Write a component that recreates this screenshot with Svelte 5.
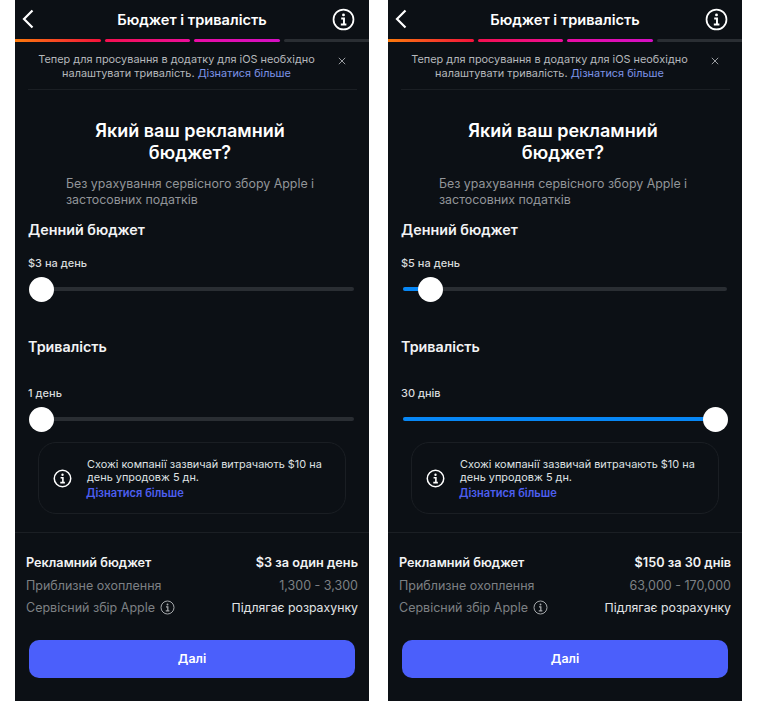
<script>
  const screens = [
    {
      dayLabel: '$3 на день',
      dayPos: 1,
      durLabel: '1 день',
      durPos: 1,
      budget: '$3 за один день',
      reach: '1,300 - 3,300'
    },
    {
      dayLabel: '$5 на день',
      dayPos: 17,
      durLabel: '30 днів',
      durPos: 302,
      budget: '$150 за 30 днів',
      reach: '63,000 - 170,000'
    }
  ];
</script>

{#snippet infoIcon(size, stroke)}
  <svg width={size} height={size} viewBox="0 0 24 24" fill="none" stroke="currentColor" stroke-width={stroke}>
    <circle cx="12" cy="12" r="10.4" />
    <circle cx="12" cy="7.2" r="1.5" fill="currentColor" stroke="none" />
    <path d="M9.6 11h2.9v6M9.2 17.2h5.8" stroke-width="2" />
  </svg>
{/snippet}

{#snippet slider(pos)}
  <div class="slider">
    <div class="track"></div>
    <div class="fill" style="width: {pos + 8}px"></div>
    <div class="thumb" style="left: {pos}px"></div>
  </div>
{/snippet}

<div class="page">
  {#each screens as s}
    <section class="phone">
      <header class="topbar">
        <svg class="back" width="12" height="20" viewBox="0 0 12 20" fill="none" stroke="currentColor" stroke-width="2.2">
          <path d="M10.5 1.5 2 10l8.5 8.5" />
        </svg>
        <h1>Бюджет і тривалість</h1>
        <span class="top-info">{@render infoIcon(23, 1.8)}</span>
      </header>

      <div class="progress">
        <span class="seg s1"></span>
        <span class="seg s2"></span>
        <span class="seg s3"></span>
        <span class="seg s4"></span>
      </div>

      <div class="notice">
        <p>Тепер для просування в додатку для iOS необхідно налаштувати тривалість. <span class="notice-link">Дізнатися більше</span></p>
        <svg class="close" width="8" height="8" viewBox="0 0 8 8" stroke="currentColor" stroke-width="1">
          <path d="M.8.8l6.4 6.4M7.2.8.8 7.2" />
        </svg>
      </div>

      <div class="intro">
        <h2>Який ваш рекламний<br />бюджет?</h2>
        <p>Без урахування сервісного збору Apple і застосовних податків</p>
      </div>

      <div class="controls">
        <h3>Денний бюджет</h3>
        <div class="value first">{s.dayLabel}</div>
        {@render slider(s.dayPos)}
        <h3 class="dur">Тривалість</h3>
        <div class="value second">{s.durLabel}</div>
        {@render slider(s.durPos)}
      </div>

      <div class="tip">
        <span class="tip-icon">{@render infoIcon(19, 1.9)}</span>
        <div class="tip-body">
          <p>Схожі компанії зазвичай витрачають $10 на день упродовж 5 дн.</p>
          <span class="tip-link">Дізнатися більше</span>
        </div>
      </div>

      <div class="summary">
        <div class="row strong">
          <span>Рекламний бюджет</span>
          <span>{s.budget}</span>
        </div>
        <div class="row">
          <span>Приблизне охоплення</span>
          <span>{s.reach}</span>
        </div>
        <div class="row">
          <span class="fee">Сервісний збір Apple {@render infoIcon(15, 1.6)}</span>
          <span class="pending">Підлягає розрахунку</span>
        </div>
      </div>

      <button class="next">Далі</button>
    </section>
  {/each}
</div>

<style>
  :global(body) {
    background: #fff;
  }

  .page {
    display: flex;
    gap: 19px;
    width: 760px;
    height: 701px;
    padding-left: 15px;
    box-sizing: border-box;
    overflow: hidden;
    font-family: Inter, "Liberation Sans", sans-serif;
  }

  .phone {
    flex: 0 0 354px;
    height: 701px;
    background: #0c1015;
    color: #fff;
    display: flex;
    flex-direction: column;
    overflow: hidden;
  }

  .topbar {
    position: relative;
    height: 39px;
    display: flex;
    align-items: center;
    justify-content: center;
    flex-shrink: 0;
  }

  .topbar h1 {
    margin: 0;
    font-size: 14.6px;
    font-weight: 600;
  }

  .back {
    position: absolute;
    left: 7px;
    top: 9px;
  }

  .top-info {
    position: absolute;
    right: 14px;
    top: 8px;
    display: flex;
  }

  .progress {
    display: flex;
    gap: 4px;
    height: 3px;
    flex-shrink: 0;
  }

  .seg {
    flex: 1;
    border-radius: 0 2px 2px 0;
  }

  .s1 {
    background: linear-gradient(90deg, #fb7a0c, #f5123c);
  }

  .s2 {
    border-radius: 2px;
    background: linear-gradient(90deg, #f5104f, #ed0d9b);
  }

  .s3 {
    border-radius: 2px;
    background: linear-gradient(90deg, #ea0ca5, #d50fc4);
  }

  .s4 {
    border-radius: 2px 0 0 2px;
    background: #2a2e33;
  }

  .notice {
    position: relative;
    margin: 0 12px 0 13px;
    height: 48px;
    padding-top: 11px;
    box-sizing: border-box;
    border-bottom: 1px solid #1b1f24;
    flex-shrink: 0;
  }

  .notice p {
    margin: 0 auto;
    width: 295px;
    transform: translateX(-16px);
    text-align: center;
    font-size: 10.9px;
    line-height: 13.5px;
    color: #b5b8bc;
  }

  .notice-link {
    color: #7d93e6;
  }

  .close {
    position: absolute;
    right: 11px;
    top: 15px;
    color: #9a9da1;
  }

  .intro {
    padding-top: 30px;
    flex-shrink: 0;
  }

  .intro h2 {
    margin: 0;
    padding-right: 4px;
    text-align: center;
    font-size: 18px;
    line-height: 21.5px;
    font-weight: 600;
  }

  .intro p {
    margin: 13px 0 0 51px;
    width: 260px;
    font-size: 12.4px;
    line-height: 15.5px;
    color: #929599;
  }

  .controls {
    padding: 0 15px 0 13px;
    flex-shrink: 0;
  }

  h3 {
    margin: 14px 0 0;
    font-size: 14.3px;
    line-height: 17px;
    font-weight: 600;
    color: #f2f3f4;
  }

  .dur {
    margin-top: 36px;
  }

  .value {
    font-size: 11px;
    line-height: 13px;
    font-weight: 500;
    color: #d8dadc;
  }

  .first {
    margin-top: 19px;
  }

  .second {
    margin-top: 32px;
  }

  .slider {
    position: relative;
    height: 26px;
    margin-top: 6px;
  }

  .track,
  .fill {
    position: absolute;
    left: 2px;
    top: 11px;
    height: 4px;
    border-radius: 2px;
  }

  .track {
    width: calc(100% - 2px);
    background: #2a2e33;
  }

  .fill {
    background: #0787f5;
  }

  .thumb {
    position: absolute;
    top: 0.5px;
    width: 25px;
    height: 25px;
    border-radius: 50%;
    background: #fff;
  }

  .tip {
    margin: 10px 23px 0;
    height: 72px;
    box-sizing: border-box;
    border: 1px solid #1a1e23;
    border-radius: 18px;
    display: flex;
    align-items: center;
    flex-shrink: 0;
  }

  .tip-icon {
    display: flex;
    margin: 0 15px 0 14px;
  }

  .tip-body {
    padding-top: 3px;
  }

  .tip p {
    margin: 0;
    width: 250px;
    font-size: 10.9px;
    line-height: 13px;
    color: #dfe1e3;
  }

  .tip-link {
    display: block;
    margin-top: 3px;
    margin-left: -1px;
    font-size: 11.1px;
    line-height: 13.5px;
    font-weight: 600;
    color: #4d5ff0;
  }

  .summary {
    margin-top: 18px;
    padding: 18.5px 11px 0;
    border-top: 1px solid #1b1f24;
    flex-shrink: 0;
  }

  .row {
    display: flex;
    justify-content: space-between;
    align-items: center;
    height: 22.5px;
    font-size: 12.5px;
    color: #7d8084;
  }

  .strong {
    font-size: 12.7px;
    font-weight: 600;
    color: #f2f3f4;
  }

  .fee {
    display: flex;
    align-items: center;
    gap: 5px;
  }

  .fee :global(svg) {
    color: #a5a8ab;
  }

  .pending {
    font-size: 12.3px;
    color: #e2e4e6;
  }

  .next {
    margin: 20.5px 14px 0;
    height: 38px;
    border: 0;
    border-radius: 10px;
    background: #4b5ffb;
    color: #fff;
    font: 600 12.4px Inter, "Liberation Sans", sans-serif;
    flex-shrink: 0;
  }
</style>
